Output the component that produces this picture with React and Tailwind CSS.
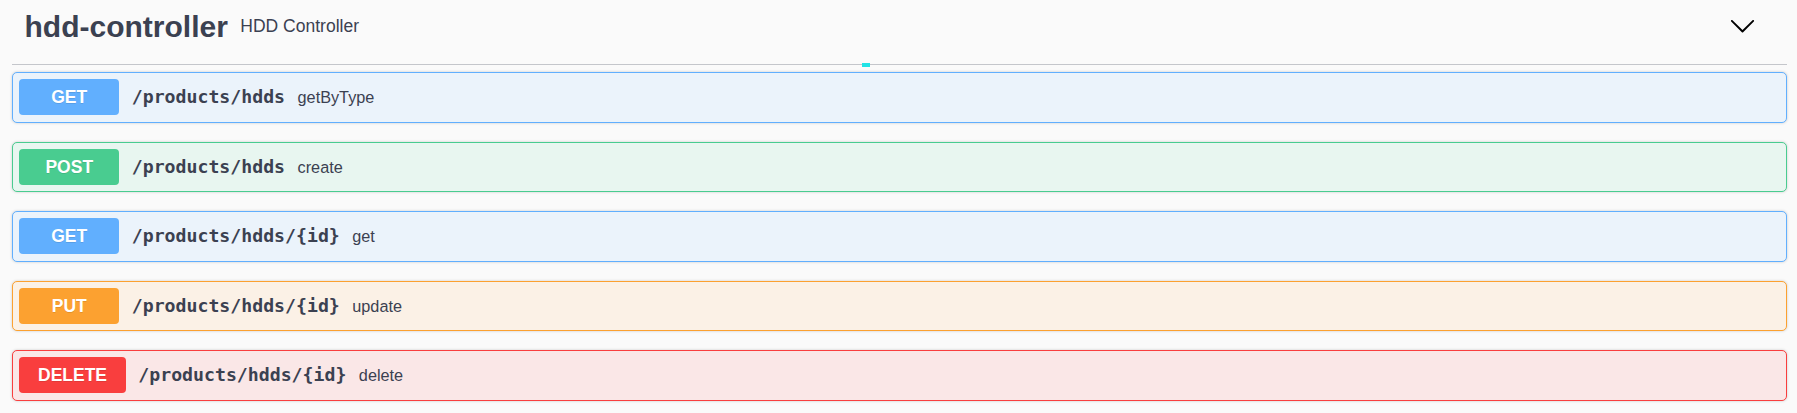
const ops = [
  { method: 'GET', path: '/products/hdds', desc: 'getByType', badge: 'bg-[#61affe]', row: 'bg-[#ebf3fb] border-[#61affe]' },
  { method: 'POST', path: '/products/hdds', desc: 'create', badge: 'bg-[#49cc90]', row: 'bg-[#e8f6f0] border-[#49cc90]' },
  { method: 'GET', path: '/products/hdds/{id}', desc: 'get', badge: 'bg-[#61affe]', row: 'bg-[#ebf3fb] border-[#61affe]' },
  { method: 'PUT', path: '/products/hdds/{id}', desc: 'update', badge: 'bg-[#fca130]', row: 'bg-[#fbf1e6] border-[#fca130]' },
  { method: 'DELETE', path: '/products/hdds/{id}', desc: 'delete', badge: 'bg-[#f93e3e]', row: 'bg-[#fae7e7] border-[#f93e3e]' },
];

function Chevron() {
  return (
    <svg width="27" height="27" viewBox="0 0 20 20" className="shrink-0">
      <path
        fill="#000"
        d="M17.418 6.109c.272-.268.709-.268.979 0s.271.701 0 .969l-7.908 7.83c-.27.268-.707.268-.979 0l-7.908-7.83c-.27-.268-.27-.701 0-.969.271-.268.709-.268.979 0L10 13.25l7.418-7.141z"
      />
    </svg>
  );
}

function OpRow({ op }) {
  return (
    <div className={`flex items-center h-[50.75px] mb-[18.75px] px-[6.25px] rounded-[5px] border-[1.25px] shadow-[0_0_3px_rgba(0,0,0,0.19)] ${op.row}`}>
      <span
        className={`flex items-center justify-center h-[36px] min-w-[100px] px-[18.75px] rounded-[4px] text-white text-[17.5px] font-bold [text-shadow:0_1px_0_rgba(0,0,0,0.1)] ${op.badge}`}
      >
        {op.method}
      </span>
      <span className="px-[12.5px] text-[18.2px] font-bold text-[#3b4151] font-['DejaVu_Sans_Mono',monospace] leading-[20px]">
        {op.path}
      </span>
      <span className="text-[16.25px] text-[#3b4151]">{op.desc}</span>
    </div>
  );
}

export default function App() {
  return (
    <div className="relative min-h-[413px] bg-[#fafafa] pl-[12px] pr-[10px] font-['Liberation_Sans',Arial,sans-serif] text-[#3b4151]">
      <div className="flex items-center h-[64.5px] pl-[12.5px] pb-[11px] mb-[7.5px] border-b-[1.25px] border-[#c4c6cb]">
        <h4 className="text-[30px] font-bold leading-normal">hdd-controller</h4>
        <small className="px-[12.5px] text-[17.5px] leading-normal">HDD Controller</small>
        <div className="ml-auto mr-[31px] mb-[1px]">
          <Chevron />
        </div>
      </div>
      <div className="absolute left-[862px] top-[63px] w-[8px] h-[4px] bg-[#22e3e6]" />
      <div>
        {ops.map((op, i) => (
          <OpRow key={i} op={op} />
        ))}
      </div>
    </div>
  );
}
